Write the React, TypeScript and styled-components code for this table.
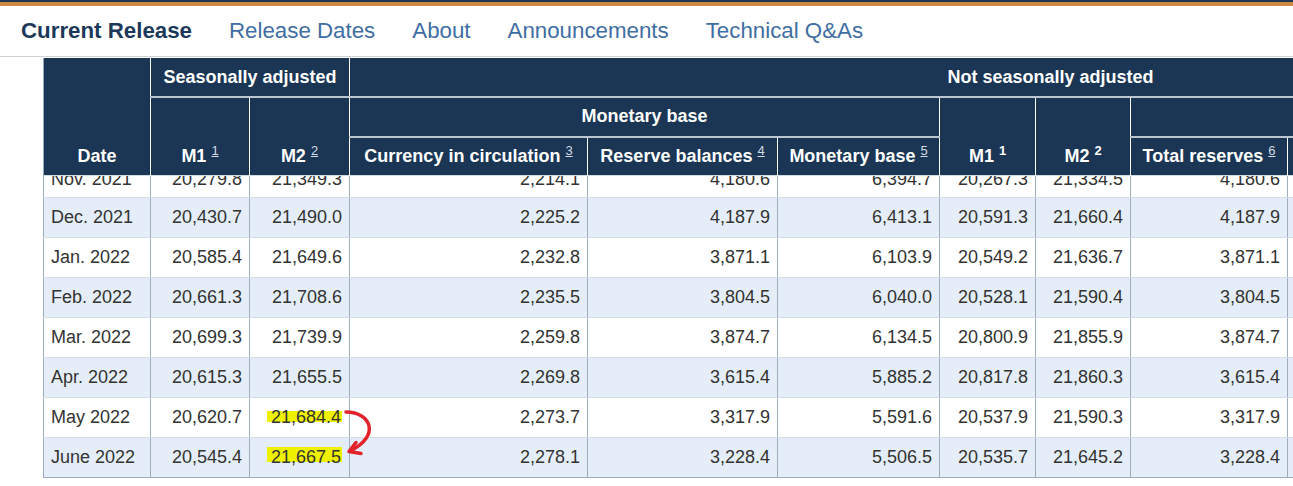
import React from 'react';
import styled, { createGlobalStyle } from 'styled-components';

const GlobalStyle = createGlobalStyle`
    html, body {
        margin: 0;
        padding: 0;
        background: #fff;
        overflow: hidden;
    }

    body {
        font-family: "Liberation Sans", Arial, sans-serif;
    }
`;

const TopStripe = styled.div`
    height: 2px;
    background: #1d3857;
    border-bottom: 4px solid #cf8b42;
`;

const Nav = styled.nav`
    display: flex;
    align-items: center;
    gap: 37px;
    height: 50px;
    padding-left: 21px;
    border-bottom: 1px solid #cfd3d7;
`;

const NavLink = styled.a<{ $active?: boolean }>`
    font-size: 22.3px;
    font-weight: ${(props) => (props.$active ? 700 : 400)};
    color: ${(props) => (props.$active ? '#1c395a' : '#3f6ea3')};
    text-decoration: none;
    white-space: nowrap;
    cursor: pointer;
`;

const TableArea = styled.section`
    padding: 1px 0 0 43px;
`;

const Table = styled.table`
    border-collapse: collapse;
    table-layout: fixed;
    width: 1708px;
    border-bottom: 1px solid #9eacbc;
`;

const Col = styled.col<{ $w: number }>`
    width: ${(props) => props.$w}px;
`;

const HeadRow = styled.tr`
    height: 39.3px;
`;

const Head = styled.th<{ $line?: boolean; $bottom?: boolean; $first?: boolean }>`
    background: #1a3654;
    color: #fff;
    font-size: 18px;
    font-weight: 700;
    line-height: 21px;
    text-align: center;
    white-space: nowrap;
    padding: 0 8px ${(props) => (props.$bottom ? '8px' : '0')};
    vertical-align: ${(props) => (props.$bottom ? 'bottom' : 'middle')};
    border-left: 1px solid ${(props) => (props.$first ? '#9aa8b8' : '#fff')};
    border-right: 1px solid #fff;
    border-bottom: ${(props) => (props.$line ? '2px solid #bcc5cf' : 'none')};
`;

const Note = styled.sup<{ $plain?: boolean }>`
    font-size: 13px;
    line-height: 0;
    vertical-align: 7px;
    font-weight: ${(props) => (props.$plain ? 700 : 400)};
    color: ${(props) => (props.$plain ? '#fff' : '#d3dbe4')};
    text-decoration: ${(props) => (props.$plain ? 'none' : 'underline')};
`;

const Row = styled.tr<{ $shade?: boolean }>`
    background: ${(props) => (props.$shade ? '#e5eef8' : '#fff')};
`;

const Cell = styled.td<{ $left?: boolean; $clip?: boolean; $anchor?: boolean }>`
    height: ${(props) => (props.$clip ? '21px' : '39px')};
    padding: 0 7px;
    font-size: 18px;
    line-height: 39px;
    color: #333;
    white-space: nowrap;
    text-align: ${(props) => (props.$left ? 'left' : 'right')};
    position: ${(props) => (props.$anchor ? 'relative' : 'static')};
    border-left: 1px solid #9eacbc;
    border-right: 1px solid #9eacbc;
    border-top: 1px solid #d3dbe3;
    border-bottom: 1px solid #d3dbe3;

    tr:last-child > & {
        border-bottom-color: #9eacbc;
    }
`;

/* the first row sits half under the header, as in the scrolled page */
const Clip = styled.div`
    height: 21px;
    overflow: hidden;
    display: flex;
    flex-direction: column;
    justify-content: flex-end;
`;

const ClipText = styled.div`
    flex: none;
    line-height: 36px;
`;

const Marked = styled.span<{ $from: number; $to: number }>`
    padding: 0 1px 0 4px;
    background: linear-gradient(
        transparent ${(props) => props.$from}%,
        #eef200 ${(props) => props.$from}%,
        #eef200 ${(props) => props.$to}%,
        transparent ${(props) => props.$to}%
    );
`;

const ArrowMark = styled.svg`
    position: absolute;
    left: 80px;
    top: 5px;
    width: 50px;
    height: 65px;
    overflow: visible;
    z-index: 2;
    pointer-events: none;
`;

type DataRow = [string, ...string[]];

const rows: DataRow[] = [
    ['Nov. 2021', '20,279.8', '21,349.3', '2,214.1', '4,180.6', '6,394.7', '20,267.3', '21,334.5', '4,180.6'],
    ['Dec. 2021', '20,430.7', '21,490.0', '2,225.2', '4,187.9', '6,413.1', '20,591.3', '21,660.4', '4,187.9'],
    ['Jan. 2022', '20,585.4', '21,649.6', '2,232.8', '3,871.1', '6,103.9', '20,549.2', '21,636.7', '3,871.1'],
    ['Feb. 2022', '20,661.3', '21,708.6', '2,235.5', '3,804.5', '6,040.0', '20,528.1', '21,590.4', '3,804.5'],
    ['Mar. 2022', '20,699.3', '21,739.9', '2,259.8', '3,874.7', '6,134.5', '20,800.9', '21,855.9', '3,874.7'],
    ['Apr. 2022', '20,615.3', '21,655.5', '2,269.8', '3,615.4', '5,885.2', '20,817.8', '21,860.3', '3,615.4'],
    ['May 2022', '20,620.7', '21,684.4', '2,273.7', '3,317.9', '5,591.6', '20,537.9', '21,590.3', '3,317.9'],
    ['June 2022', '20,545.4', '21,667.5', '2,278.1', '3,228.4', '5,506.5', '20,535.7', '21,645.2', '3,228.4'],
];

const widths = [107, 99, 100, 238, 190, 162, 96, 95, 157, 232, 232];

// highlighter bands drawn behind the M2 values that were marked up
const marks: Record<string, [number, number]> = {
    'May 2022': [19, 77],
    'June 2022': [0, 76],
};

function CurveArrow() {
    return (
        <ArrowMark viewBox="0 0 50 65">
            <path
                d="M16 9 C 41 9, 51 33, 20 48"
                fill="none"
                stroke="#e3232b"
                strokeWidth="3.5"
                strokeLinecap="round"
            />
            <path
                d="M26 39.5 L 19 48.5 L 31 50.5"
                fill="none"
                stroke="#e3232b"
                strokeWidth="3.5"
                strokeLinecap="round"
                strokeLinejoin="round"
            />
        </ArrowMark>
    );
}

export default function App() {
    return (
        <>
            <GlobalStyle />
            <TopStripe />
            <Nav>
                <NavLink $active>Current Release</NavLink>
                <NavLink>Release Dates</NavLink>
                <NavLink>About</NavLink>
                <NavLink>Announcements</NavLink>
                <NavLink>Technical Q&amp;As</NavLink>
            </Nav>
            <TableArea>
                <Table>
                    <colgroup>
                        {widths.map((w, i) => (
                            <Col key={i} $w={w} />
                        ))}
                    </colgroup>
                    <thead>
                        <HeadRow>
                            <Head rowSpan={3} $bottom $first>
                                Date
                            </Head>
                            <Head colSpan={2} $line>
                                Seasonally adjusted
                            </Head>
                            <Head colSpan={8} $line>
                                Not seasonally adjusted
                            </Head>
                        </HeadRow>
                        <HeadRow>
                            <Head rowSpan={2} $bottom>
                                M1 <Note>1</Note>
                            </Head>
                            <Head rowSpan={2} $bottom>
                                M2 <Note>2</Note>
                            </Head>
                            <Head colSpan={3} $line>
                                Monetary base
                            </Head>
                            <Head rowSpan={2} $bottom>
                                M1 <Note $plain>1</Note>
                            </Head>
                            <Head rowSpan={2} $bottom>
                                M2 <Note $plain>2</Note>
                            </Head>
                            <Head colSpan={3} $line />
                        </HeadRow>
                        <HeadRow>
                            <Head>
                                Currency in circulation <Note>3</Note>
                            </Head>
                            <Head>
                                Reserve balances <Note>4</Note>
                            </Head>
                            <Head>
                                Monetary base <Note>5</Note>
                            </Head>
                            <Head>
                                Total reserves <Note>6</Note>
                            </Head>
                            <Head />
                            <Head />
                        </HeadRow>
                    </thead>
                    <tbody>
                        {rows.map(([date, ...values], r) => {
                            const clipped = r === 0;
                            const band = marks[date];
                            return (
                                <Row key={date} $shade={r % 2 === 1}>
                                    {[date, ...values, '', ''].map((v, c) => {
                                        let content: React.ReactNode = v;
                                        if (c === 2 && band) {
                                            content = (
                                                <Marked $from={band[0]} $to={band[1]}>
                                                    {v}
                                                </Marked>
                                            );
                                        }
                                        if (clipped) {
                                            content = (
                                                <Clip>
                                                    <ClipText>{content}</ClipText>
                                                </Clip>
                                            );
                                        }
                                        const anchor = c === 2 && date === 'May 2022';
                                        return (
                                            <Cell
                                                key={c}
                                                $left={c === 0}
                                                $clip={clipped}
                                                $anchor={anchor}
                                            >
                                                {content}
                                                {anchor && <CurveArrow />}
                                            </Cell>
                                        );
                                    })}
                                </Row>
                            );
                        })}
                    </tbody>
                </Table>
            </TableArea>
        </>
    );
}
